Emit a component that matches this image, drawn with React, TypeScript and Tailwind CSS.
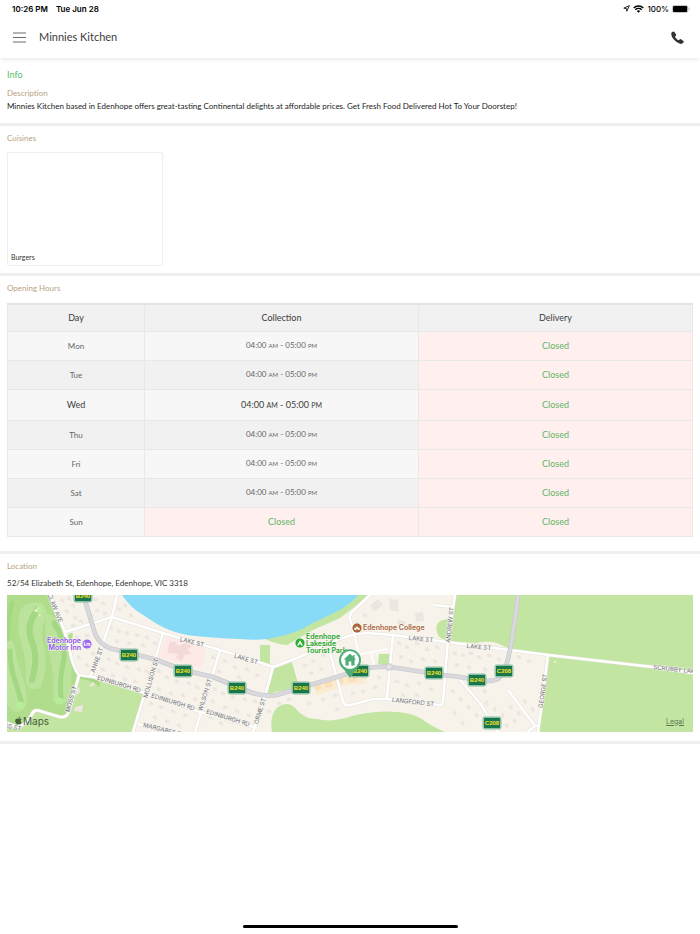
import { FaApple } from "react-icons/fa";
import type { ReactNode } from "react";

type HoursType = { from: string; to: string } | null;

type DayType = {
  day: string;
  collection: HoursType;
  delivery: HoursType;
};

const today = "Wed";
const open: HoursType = { from: "04:00", to: "05:00" };

const days: DayType[] = [
  { day: "Mon", collection: open, delivery: null },
  { day: "Tue", collection: open, delivery: null },
  { day: "Wed", collection: open, delivery: null },
  { day: "Thu", collection: open, delivery: null },
  { day: "Fri", collection: open, delivery: null },
  { day: "Sat", collection: open, delivery: null },
  { day: "Sun", collection: null, delivery: null },
];

const StatusBar = () => (
  <div className="flex h-4 items-center justify-between pt-px pr-2.5 pl-3 font-['Inter',sans-serif] text-[8px] leading-3 font-semibold text-black">
    <div className="flex gap-2">
      <span>10:26 PM</span>
      <span>Tue Jun 28</span>
    </div>
    <div className="flex items-center gap-[3px] font-medium">
      <svg className="size-[7px]" viewBox="0 0 14 14" fill="none">
        <path
          d="M12.6 1.4 1.6 6.3l5.3.8.8 5.3z"
          stroke="black"
          strokeWidth="1.7"
          strokeLinejoin="round"
        />
      </svg>
      <svg className="h-[8px] w-[11px]" viewBox="0 0 20 14">
        <path d="M10 14 6.9 10.8a4.5 4.5 0 0 1 6.2 0z" />
        <path
          d="M1.2 5.1a12.6 12.6 0 0 1 17.6 0M4.2 8.3a8.3 8.3 0 0 1 11.6 0"
          fill="none"
          stroke="black"
          strokeWidth="2.5"
        />
      </svg>
      <span>100%</span>
      <svg className="h-[8px] w-[18px]" viewBox="0 0 36 16">
        <rect x=".7" y=".7" width="31" height="14.6" rx="4" fill="white" stroke="#a3a3a3" strokeWidth="1.4" />
        <rect x="2" y="2" width="28.4" height="12" rx="2.6" />
        <path d="M33.4 5.4c2.2.8 2.2 4.4 0 5.2z" fill="#a3a3a3" />
      </svg>
    </div>
  </div>
);

const Header = () => (
  <header className="flex h-[42px] items-center justify-between pr-4 pl-[13px] shadow-[0_3px_3px_-1px_rgba(0,0,0,0.08)]">
    <div className="flex items-center gap-[13px]">
      <button type="button" aria-label="Menu">
        <svg className="h-[11px] w-[13px]" viewBox="0 0 13 11" stroke="#6b6b6b">
          <path d="M0 1h13M0 5.5h13M0 10h13" strokeWidth="1" />
        </svg>
      </button>
      <h1 className="text-[11px] leading-4 text-[#3c3c3c]">Minnies Kitchen</h1>
    </div>
    <button type="button" aria-label="Call">
      <svg className="size-[13px]" viewBox="0 0 13 13" fill="#333">
        <path d="M1 1.2Q2.2 0 3.2.7L5 3.2Q5.400 4 4.800 4.700L4.200 5.400Q4 5.900 4.400 6.400 5.600 8 7 9 7.500 9.300 8 9L8.600 8.400Q9.300 7.900 10 8.300L12.400 10Q13.100 10.800 12.200 11.800 11 13.300 9 12.800 5.500 11.800 2.800 8.600.2 5.300.2 3 .2 2 1 1.200z" />
      </svg>
    </button>
  </header>
);

const Label = ({ children }: { children: ReactNode }) => (
  <h2 className="text-[8px] leading-3 text-[#b9a380]">{children}</h2>
);

const Hours = ({ hours, isToday }: { hours: HoursType; isToday: boolean }) => {
  if (!hours) {
    return (
      <td className="border border-[#e8e8e8] bg-[#ffefef] text-[9px] text-[#62b566]">
        Closed
      </td>
    );
  }
  const small = isToday ? "text-[7px]" : "text-[6px]";
  return (
    <td className="border border-[#e8e8e8]">
      {hours.from} <span className={small}>AM</span> - {hours.to}{" "}
      <span className={small}>PM</span>
    </td>
  );
};

const OpeningHours = () => (
  <table className="mt-[9px] w-full table-fixed border-collapse border-t-2 border-t-[#e3e3e3] text-center leading-4">
    <thead className="text-[9px] text-[#3c3c3c]">
      <tr className="h-[27px] bg-[#f1f1f1]">
        <th className="w-1/5 border border-[#e8e8e8] font-normal">Day</th>
        <th className="w-2/5 border border-[#e8e8e8] font-normal">Collection</th>
        <th className="w-2/5 border border-[#e8e8e8] font-normal">Delivery</th>
      </tr>
    </thead>
    <tbody>
      {days.map((item) => (
        <tr
          key={item.day}
          className={
            item.day === today
              ? "h-[31px] bg-[#f7f7f7] text-[9px] text-[#3c3c3c]"
              : "h-[29px] text-[8px] text-[#666] odd:bg-[#f7f7f7] even:bg-[#f1f1f1]"
          }
        >
          <td className="border border-[#e8e8e8]">{item.day}</td>
          <Hours hours={item.collection} isToday={item.day === today} />
          <Hours hours={item.delivery} isToday={item.day === today} />
        </tr>
      ))}
    </tbody>
  </table>
);

const highway =
  "M76 0 80 12 86 32Q90 50 106 54L123 58 150 65 176 75 206 82 243 97Q256 102 270 100L293 93 330 82 356 74Q370 71 383 72L410 76 436 80 453 82 470 85Q488 88 493 82 499 76 503 55L508 25 511 0";

const streets = [
  "M43 -2 48 15 56 32 61 48 65 65Q68 75 72 80L86 82 138 98 193 117 233 128 250 133",
  "M72 80 68 95 62 116Q60 123 53 122L33 116Q27 114 25 119 20 130 10 132L0 128",
  "M58 37 105 22 156 38 233 61 266 72 290 63 323 48Q345 38 361 38L386 40 463 50 503 55 541 60 646 72 686 78",
  "M110 0 105 22 96 48 83 82",
  "M156 38 138 98 126 137",
  "M213 55 201 95 188 137",
  "M266 72 255 112 246 137",
  "M131 129 166 139",
  "M363 0 345 17Q342 20 343 24L348 42",
  "M323 58 336 106Q338 112 344 110L366 104 380 104 432 110Q436 110 436 106L441 45 448 0",
  "M386 40 380 103",
  "M426 10 446 12",
  "M453 85 473 108 491 137",
  "M501 95 528 131 519 138M528 131 532 131",
  "M541 60 531 137",
];

const lanes = ["M348 42 352 60 356 74", "M350 60 380 54", "M364 58 367 70"];

// x, y, rotation of every house footprint
const houses = [
  [55, 5, 20], [62, 3, 20], [66, 10, 20], [60, 16, 20], [68, 22, 20], [74, 26, 20], [66, 30, -18],
  [88, 4, -14], [96, 8, -14], [90, 15, -14], [98, 18, -14], [84, 20, -14], [70, 42, -18], [80, 40, -18],
  [78, 50, 30], [86, 58, 30], [72, 62, 30], [80, 70, 15], [118, 10, 15], [124, 20, 15], [112, 14, 15],
  [104, 33, 16], [112, 36, 16], [120, 38, 16], [130, 40, 16], [140, 42, 16], [110, 46, 16], [122, 48, 16],
  [136, 50, 16], [148, 48, 16], [102, 64, 16], [110, 68, 16], [120, 72, 16], [132, 74, 16], [96, 74, 16],
  [106, 80, 16], [118, 84, 16], [128, 86, 16], [140, 76, 16], [152, 76, 16], [160, 82, 16], [170, 86, 16],
  [182, 88, 16], [190, 92, 16], [152, 94, 16], [164, 98, 16], [176, 100, 16], [188, 104, 16], [144, 108, 16],
  [154, 112, 16], [166, 116, 16], [178, 120, 16], [148, 122, 16], [160, 126, 16], [172, 130, 16],
  [206, 62, 16], [218, 66, 16], [228, 72, 16], [240, 74, 16], [250, 80, 16], [212, 76, 16], [232, 82, 16],
  [208, 94, 16], [216, 98, 16], [226, 102, 16], [238, 104, 16], [248, 106, 16], [206, 106, 16], [218, 112, 16],
  [230, 116, 16], [242, 120, 16], [204, 122, 16], [214, 128, 16], [298, 70, -20], [306, 66, -20], [304, 78, -20],
  [314, 74, -20], [316, 60, -20], [272, 108, -10], [262, 116, -10], [282, 104, -15], [302, 108, -15],
  [316, 104, -15], [328, 100, -15], [330, 114, 10], [346, 98, -10], [356, 96, -10], [368, 92, -10],
  [350, 28, 20], [358, 20, 20], [364, 30, 20], [392, 48, 6], [400, 52, 6], [410, 48, 6], [420, 54, 6],
  [430, 52, 6], [394, 62, 6], [404, 66, 6], [416, 64, 6], [428, 66, 6], [390, 86, 6], [400, 90, 6],
  [412, 88, 6], [424, 94, 6], [396, 100, 6], [410, 100, 6], [372, 82, 6], [448, 58, 6], [456, 60, 6],
  [464, 58, 6], [472, 62, 6], [482, 60, 6], [492, 64, 6], [450, 70, 6], [462, 72, 6], [478, 74, 6],
  [512, 62, 6], [522, 66, 6], [446, 96, 20], [454, 104, 50], [462, 112, 50], [470, 120, 50], [480, 108, 50],
  [488, 114, 50], [496, 120, 50], [478, 96, 50], [504, 112, 50], [512, 118, 50], [508, 126, 50], [518, 106, 50],
  [526, 114, 50], [448, 118, 50], [456, 128, 50], [500, 130, 50],
];

const streetNames: [string, number, number, number][] = [
  ["CLAW AVE", 48, 13, 68],
  ["LAKE ST", 185, 47, 14],
  ["LAKE ST", 239, 64, 16],
  ["LAKE ST", 414, 44, 5],
  ["LAKE ST", 472, 52, 5],
  ["ANNE ST", 90, 65, -70],
  ["MOLLISON ST", 144, 83, -74],
  ["WILSON ST", 198, 100, -73],
  ["ORME ST", 253, 116, -73],
  ["MOSS ST", 64, 104, -75],
  ["EDINBURGH RD", 112, 89, 17],
  ["EDINBURGH RD", 166, 107, 17],
  ["EDINBURGH RD", 221, 123, 17],
  ["MARGARET ST", 157, 135, 14],
  ["ANDREW ST", 443, 30, -84],
  ["LANGFORD ST", 406, 107, 6],
  ["GEORGE ST", 536, 96, -82],
  ["SCRUBBY LAKE RD", 674, 75, 6],
  ["MOSS ST", 1, 131, 12],
];

const shields: [string, number, number][] = [
  ["B240", 76, 1],
  ["B240", 122, 60],
  ["B240", 176, 76],
  ["B240", 230, 93],
  ["B240", 294, 93],
  ["B240", 353, 76],
  ["B240", 427, 78],
  ["B240", 470, 85],
  ["C208", 497, 76],
  ["C208", 485, 128],
];

const MapDrawing = () => (
  <svg
    className="h-[137px] w-full font-['Inter',sans-serif]"
    viewBox="0 0 686 137"
    preserveAspectRatio="xMidYMid slice"
    role="img"
    aria-label="Map of Edenhope"
  >
    <rect width="686" height="137" fill="#f7f3ea" />
    {/* parks and fields */}
    <g fill="#c2e5a2">
      <path d="M256 43 Q268 49 280 50L306 35 333 23 346 13 363 0H340z" />
      <path d="M72 80 86 82 138 98 126 137H0V126z" />
      <path d="M449 0H686V78L541 60 503 55Q485 45 470 48L441 46Q427 43 430 30 432 24 443 24z" />
      <path d="M541 60 686 78V137H531z" />
      <path d="M260 99 266 74 285 67 292 92z" />
      <path d="M253 50h10v19l-10-3z" />
      <path d="M372 59h11l-1 12-11-2z" />
      <path d="M265 137Q262 120 271 112 281 105 289 114 297 124 310 124 325 128 345 121 370 115 390 117 405 118 415 124 422 130 438 137z" />
    </g>
    <path d="M470 48Q480 45 490 48L503 54 470 50z" fill="#f7f3ea" />
    {/* golf course */}
    <path d="M0 0H43L48 15 56 32 61 48 65 65 72 80 68 95 62 118 53 122 33 116 25 119 10 132 0 128z" fill="#afdd8c" />
    <g fill="#bbe39b">
      <path d="M14 14Q20 6 34 8 42 12 38 26 32 38 38 56 40 74 34 92 24 98 19 88 20 66 14 48 8 28 14 14z" />
      <path d="M40 18Q52 22 60 46 68 70 62 104 54 114 46 106 48 84 42 56 36 34 40 18z" />
      <path d="M0 36Q8 46 10 66 20 90 20 108 16 120 6 116L0 110z" />
    </g>
    <g fill="none" stroke="#a3d781" strokeWidth="6" strokeLinecap="round">
      <path d="M30 15Q19 30 24 44 32 62 25 85" />
      <path d="M47 28Q59 46 57 64 52 84 54 102" strokeWidth="5" />
      <path d="M5 8Q0 24 1 44M3 56Q3 74 9 88L14 106" strokeWidth="5" />
    </g>
    <g fill="#b4ee98">
      <circle cx="32" cy="15" r="3" />
      <circle cx="13" cy="110" r="3.5" />
      <circle cx="52" cy="106" r="3.5" />
    </g>
    <path d="M27 15l3-1 1 2-3 1zM31 19l3 1-1 2zM30 13l2-1v2z" fill="#f7efcf" />
    <path d="M61 40Q68 34 65 44 60 46 61 40z" fill="#b5e091" />
    <path d="M73 81 86 83Q96 88 92 92 84 84 73 84z" fill="#a6d982" />
    {/* lake */}
    <path d="M115 0Q124 13 133 18L150 29Q164 37 180 40 205 43 233 44 256 46 270 42 290 38 306 28L333 15Q346 7 351 0z" fill="#88dbf7" />
    {/* school and shops */}
    <path d="M160 41 200 52 194 73 152 62z" fill="#fdeae6" />
    <path d="M162 48l6-2 3 5 8-3 6 3-5 4 5 3-8 2-2 6-6-3 2-4-10-1z" fill="#f3d9d7" />
    <path d="M304 88 320 84 356 73 360 88 340 90 310 100z" fill="#fbebd0" />
    <path d="M307 90l6-2 2 6-6 2zM317 87l7-2 2 6-7 2zM328 84l8-2 1 6-8 2zM340 82l8-3 2 7-8 2zM348 68l8-2 1 4-7 3z" fill="#f8e0ba" />
    <g fill="#ebe7e0">
      {houses.map(([x, y, angle]) => (
        <path
          key={`${x}-${y}`}
          d="M-2-1.5h3v1h1.5v2.5h-4.5z"
          transform={`translate(${x} ${y}) rotate(${angle})`}
        />
      ))}
      <path d="M363 10l8-6 5 6-9 7zM382 4l9 1 1 12-9-2zM408 18l8-1 1 9-8 1zM391 24l8 3-1 4-8-2z" />
      <path d="M68 96l4-4 1 5-3 3zM82 90l5-3 1 3-4 2zM68 112l8-2-1 7-8-1z" />
    </g>
    {/* roads */}
    <g fill="none" strokeLinejoin="round">
      {streets.map((d) => (
        <path key={d} d={d} stroke="#e4e0d8" strokeWidth="3.6" />
      ))}
      {lanes.map((d) => (
        <path key={d} d={d} stroke="white" strokeWidth="1.5" />
      ))}
      {streets.map((d) => (
        <path key={d} d={d} stroke="white" strokeWidth="2.6" />
      ))}
      <path d={highway} stroke="#c6c6cb" strokeWidth="4.6" />
      <path d={highway} stroke="#d8d8dd" strokeWidth="3.4" />
    </g>
    <circle cx="382" cy="72" r="3.6" fill="#dcdce0" stroke="#c6c6cb" strokeWidth=".6" />
    <circle cx="382" cy="72" r="1" fill="#f7f3ea" />
    <circle cx="548" cy="67" r="1" fill="#edf6e4" />
    {/* street names */}
    <g fill="#6c6c72" stroke="#f9f7f2" strokeWidth="1" paintOrder="stroke" textAnchor="middle" fontSize="6">
      {streetNames.map(([name, x, y, angle]) => (
        <text key={`${x}-${y}`} transform={`translate(${x} ${y}) rotate(${angle})`} dy="2">
          {name}
        </text>
      ))}
    </g>
    {/* route shields */}
    {shields.map(([name, x, y]) => (
      <g key={`${x}-${y}`} transform={`translate(${x} ${y})`}>
        <rect x="-9.5" y="-6.5" width="19" height="13" rx="2.4" fill="#86bfa3" />
        <rect x="-8.6" y="-5.6" width="17.2" height="11.2" rx="1.8" fill="#e0eee3" />
        <rect x="-8.2" y="-5.2" width="16.4" height="10.4" rx="1.3" fill="#19764c" />
        <text
          className="font-['Liberation_Sans',sans-serif]"
          y="2"
          textAnchor="middle"
          fontSize="6"
          fontWeight="700"
          fill="#f7e224"
        >
          {name}
        </text>
      </g>
    ))}
    {/* places */}
    <g fontSize="7" fontWeight="600" stroke="#f9f7f2" strokeWidth="1" paintOrder="stroke">
      <g fill="#8f52e8" textAnchor="end">
        <text x="74" y="48">Edenhope</text>
        <text x="74" y="55">Motor Inn</text>
      </g>
      <g fill="#27a52b">
        <text x="299" y="44">Edenhope</text>
        <text x="299" y="51">Lakeside</text>
        <text x="299" y="58">Tourist Park</text>
      </g>
      <text x="356" y="35" fill="#a9653c">Edenhope College</text>
    </g>
    <circle cx="80" cy="49" r="4.6" fill="#9e6bee" />
    <path d="M77.300 47v4M77.300 50h5.600v1M79.500 48.500h3.200v1.500" fill="none" stroke="white" strokeWidth=".9" />
    <circle cx="293" cy="48" r="4.600" fill="#2aae2f" />
    <path d="M293 45.200 296 50.600H294.200L293 48.300 291.800 50.600H290z" fill="white" />
    <circle cx="350" cy="33" r="4.600" fill="#a9653c" />
    <path d="M347.400 35v-2.200h1.400l1.200-1.800 1.200 1.800h1.400V35h-2v-1.400h-1.200V35z" fill="white" />
    {/* restaurant pin */}
    <path d="M343 83 337 74.500A11 11 0 1 1 349 74.500z" fill="#4fae78" />
    <circle cx="343" cy="65" r="9" fill="white" />
    <path d="M343 58.600 336.700 64.600H338.400V70.400H341.700V66.600H344.300V70.400H347.600V64.600H349.300L347.500 62.900V60H345.900V61.400z" fill="#4fae78" />
  </svg>
);

const App = () => (
  <div className="flex min-h-screen flex-col bg-white font-['Lato',sans-serif]">
    <StatusBar />
    <Header />
    <main>
      <section className="border-b-3 border-[#eee] px-[7px] pt-[11px] pb-[11px]">
        <p className="text-[9px] leading-3 text-[#55bd69]">Info</p>
        <div className="pt-[6px]">
          <Label>Description</Label>
        </div>
        <p className="pt-px text-[8px] leading-3 text-[#1c1c1c]">
          Minnies Kitchen based in Edenhope offers great-tasting Continental
          delights at affordable prices. Get Fresh Food Delivered Hot To Your
          Doorstep!
        </p>
      </section>
      <section className="border-b-3 border-[#eee] px-[7px] pt-[6px] pb-[7px]">
        <Label>Cuisines</Label>
        <div className="mt-2 flex h-[114px] w-[156px] items-end rounded-xs border border-[#eee] px-[3px] pb-[2px] text-[7px] leading-3 text-[#333]">
          Burgers
        </div>
      </section>
      <section className="border-b-3 border-[#eee] px-[7px] pt-[6px] pb-[14px]">
        <Label>Opening Hours</Label>
        <OpeningHours />
      </section>
      <section className="border-b-3 border-[#eee] px-[7px] pt-[6px] pb-[9px]">
        <Label>Location</Label>
        <p className="pt-[5px] text-[8px] leading-3 text-[#333]">
          52/54 Elizabeth St, Edenhope, Edenhope, VIC 3318
        </p>
        <div className="relative mt-[6px]">
          <MapDrawing />
          <div className="absolute bottom-[5px] left-[7px] flex items-center text-[#46603c]">
            <FaApple className="size-[9px]" />
            <span className="font-['Inter',sans-serif] text-[10px] leading-3">Maps</span>
          </div>
          <a
            href="#legal"
            className="absolute right-[9px] bottom-1 font-['Inter',sans-serif] text-[7px] leading-3 text-[#5c7a4c] underline"
          >
            Legal
          </a>
        </div>
      </section>
    </main>
    <div className="mt-auto flex justify-center pt-4 pb-[6px]">
      <div className="h-[3px] w-[215px] rounded-full bg-black" />
    </div>
  </div>
);

export default App;
